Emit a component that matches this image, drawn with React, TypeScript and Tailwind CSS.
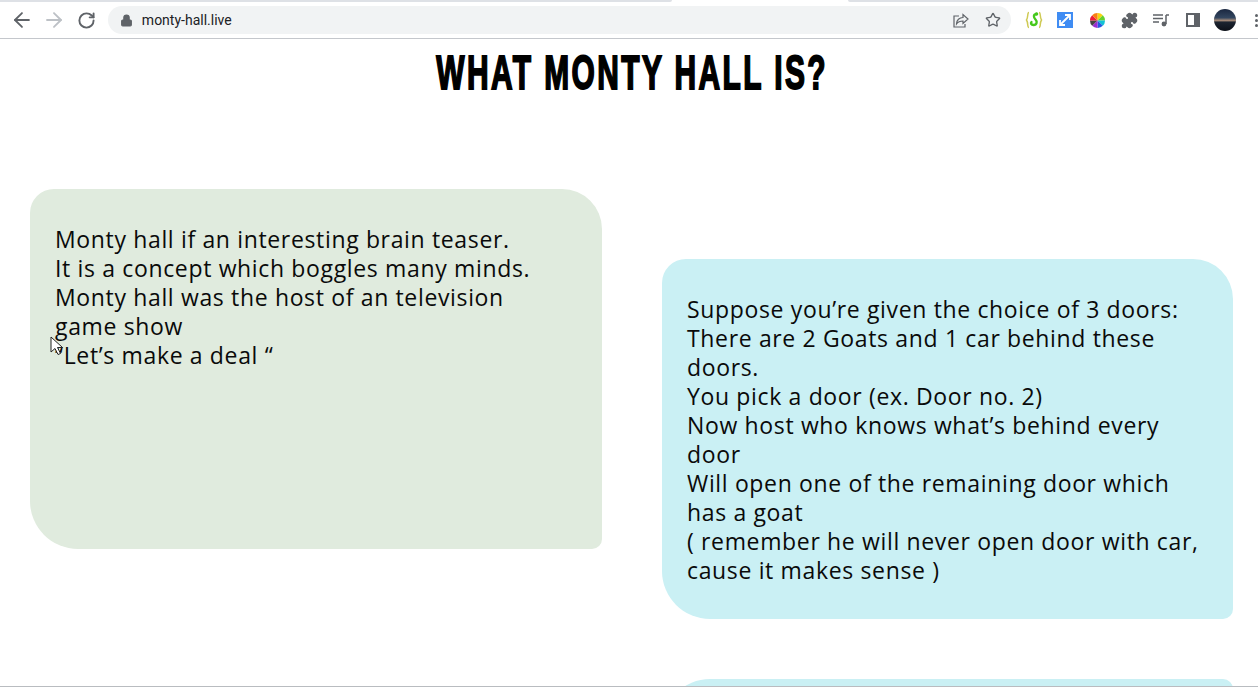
import { ArrowLeft, ArrowRight, RotateCw, Lock, Star, Puzzle } from "lucide-react";

function Toolbar() {
  return (
    <div className="flex h-[39px] flex-col border-b border-[#c4c7cc] bg-white">
      <div className="flex h-[3px] items-start bg-white">
        <div className="h-[2px] w-[672px] rounded-br-[3px] bg-[#dee1e6]" />
        <div className="h-[2px] w-[176px]" />
        <div className="h-[2px] flex-1 rounded-bl-[3px] bg-[#dee1e6]" />
      </div>
      <div className="flex h-[35px] items-center pb-[1px] pl-[10px]">
        <ArrowLeft size={24} strokeWidth={1.8} className="text-[#5f6368]" />
        <ArrowRight size={24} strokeWidth={1.8} className="ml-[8px] text-[#bdc1c6]" />
        <RotateCw size={19} strokeWidth={2.4} className="ml-[11px] text-[#5f6368]" />
        <div className="ml-[12px] flex h-[28px] w-[905px] items-center rounded-full bg-[#f1f3f4] pl-[12px]">
          <Lock size={13} fill="#5f6368" className="text-[#5f6368]" />
          <span className="ml-[9px] font-['Roboto',sans-serif] text-[14px] text-[#202124]">monty-hall.live</span>
          <svg className="ml-auto" width="16" height="15" viewBox="0 0 16 15" fill="none" stroke="#5f6368" strokeWidth="1.200">
            <path d="M6 3H1v11h11v-3" />
            <path d="M3.500 11c0-4 3-6.500 6.500-6.500V1.500l5 4.500-5 4.500V8c-3 0-5 .8-6.500 3z" />
          </svg>
          <Star size={16} strokeWidth={2} className="ml-[16px] mr-[10px] text-[#5f6368]" />
        </div>
        <div className="ml-[14px] flex items-center">
          <svg width="18" height="18" viewBox="0 0 18 18" fill="none">
            <path d="M4 1.500C2 1.500 3.500 6 1.500 9 3.500 12 2 16.500 4 16.500M14 1.500c2 0 .5 4.500 2.500 7.500-2 3-.5 7.500-2.500 7.500" stroke="#cfca55" strokeWidth="1.500" />
            <path d="M11.500 3c-3.500.5-3 3.500-1 5.500s1.500 5.500-2 5.500c-2.500 0-3-2-2-3" stroke="#45c81c" strokeWidth="2.400" strokeLinecap="round" />
            <circle cx="11.500" cy="3" r="1.800" fill="#45c81c" />
          </svg>
          <svg className="ml-[14px]" width="16" height="16" viewBox="0 0 16 16">
            <rect width="16" height="16" fill="#3f8cf3" />
            <path d="M3.500 12.500 12.500 3.500M8 3h5v5M3 8v5h5" stroke="#fff" strokeWidth="1.800" fill="none" />
          </svg>
          <svg className="ml-[17px]" width="15" height="15" viewBox="0 0 14 14">
            <path d="M7 7V0a7 7 0 0 1 5 2z" fill="#f5d40f" />
            <path d="M7 7 12 2a7 7 0 0 1 2 5z" fill="#65d12f" />
            <path d="M7 7h7a7 7 0 0 1-2 5z" fill="#12c2d6" />
            <path d="M7 7l5 5a7 7 0 0 1-5 2z" fill="#2457e0" />
            <path d="M7 7v7a7 7 0 0 1-5-2z" fill="#9a2fd0" />
            <path d="M7 7l-5 5a7 7 0 0 1-2-5z" fill="#444444" />
            <path d="M7 7H0a7 7 0 0 1 2-5z" fill="#ee1c3a" />
            <path d="M7 7 2 2a7 7 0 0 1 5-2z" fill="#f77f14" />
          </svg>
          <Puzzle size={17} fill="#5f6368" className="ml-[16px] text-[#5f6368]" />
          <svg className="ml-[15px]" width="16" height="14" viewBox="0 0 16 14" fill="none" stroke="#5f6368" strokeWidth="1.500">
            <path d="M0 2h10M0 5.500h10M0 9h6M13 2v9" />
            <circle cx="11" cy="11" r="1.700" fill="#5f6368" />
            <path d="M13 2h3" />
          </svg>
          <svg className="ml-[17px]" width="14" height="14" viewBox="0 0 14 14">
            <rect x="1" y="1" width="12" height="12" fill="none" stroke="#5f6368" strokeWidth="2" />
            <rect x="8" y="1" width="5" height="12" fill="#5f6368" />
          </svg>
          <div className="ml-[14px] h-[22px] w-[22px] rounded-full bg-[linear-gradient(#1a2740_0%,#33465f_40%,#a58a78_52%,#1c2430_60%,#0c1018_100%)]" />
          <div className="ml-[19px] flex flex-col gap-[2px]">
            <div className="h-[3px] w-[3px] rounded-full bg-[#5f6368]" />
            <div className="h-[3px] w-[3px] rounded-full bg-[#5f6368]" />
            <div className="h-[3px] w-[3px] rounded-full bg-[#5f6368]" />
          </div>
        </div>
      </div>
    </div>
  );
}

function Card({ lines, className }: { lines: string[]; className: string }) {
  return (
    <div className={`h-[360px] pl-[25px] pr-[30px] pt-[36px] font-['Open_Sans',sans-serif] text-[23px] leading-[29px] tracking-[0.65px] text-[#0a0a0a] ${className}`}>
      {lines.map((l) => (
        <div key={l}>{l}</div>
      ))}
    </div>
  );
}

export default function App() {
  return (
    <div className="relative h-[688px] w-[1258px] overflow-hidden bg-white">
      <Toolbar />
      <h1 className="mt-[7px] pl-[6px] text-center font-['Liberation_Sans',sans-serif] text-[49px] font-bold leading-[52px] tracking-[4px] text-black [-webkit-text-stroke:2px_black]">
        <span className="inline-block origin-center scale-x-[0.61]">WHAT MONTY HALL IS?</span>
      </h1>
      <div className="mt-[91px] flex items-start gap-[60px] pl-[30px]">
        <Card
          className="w-[572px] rounded-tl-[24px] rounded-tr-[40px] rounded-br-[10px] rounded-bl-[48px] bg-[#e0ebde]"
          lines={[
            "Monty hall if an interesting brain teaser.",
            "It is a concept which boggles many minds.",
            "Monty hall was the host of an television",
            "game show",
            "“Let’s make a deal “",
          ]}
        />
        <div className="mt-[70px] flex flex-col gap-[60px]">
          <Card
            className="w-[571px] rounded-tl-[24px] rounded-tr-[40px] rounded-br-[10px] rounded-bl-[48px] bg-[#caf0f4]"
            lines={[
              "Suppose you’re given the choice of 3 doors:",
              "There are 2 Goats and 1 car behind these",
              "doors.",
              "You pick a door (ex. Door no. 2)",
              "Now host who knows what’s behind every",
              "door",
              "Will open one of the remaining door which",
              "has a goat",
              "( remember he will never open door with car,",
              "cause it makes sense )",
            ]}
          />
          <Card className="w-[571px] rounded-tl-[48px] rounded-tr-[10px] bg-[#caf0f4]" lines={[]} />
        </div>
      </div>
      <div className="absolute bottom-0 left-0 h-[2px] w-full border-t border-[#b9bcc0] bg-white" />
      <svg className="absolute left-[50px] top-[336px]" width="14" height="20" viewBox="0 0 14 20">
        <path d="M1 1v15l4-3.500 3 6 2.500-1-3-6h5z" fill="#fff" stroke="#222" strokeWidth="1" />
      </svg>
    </div>
  );
}
